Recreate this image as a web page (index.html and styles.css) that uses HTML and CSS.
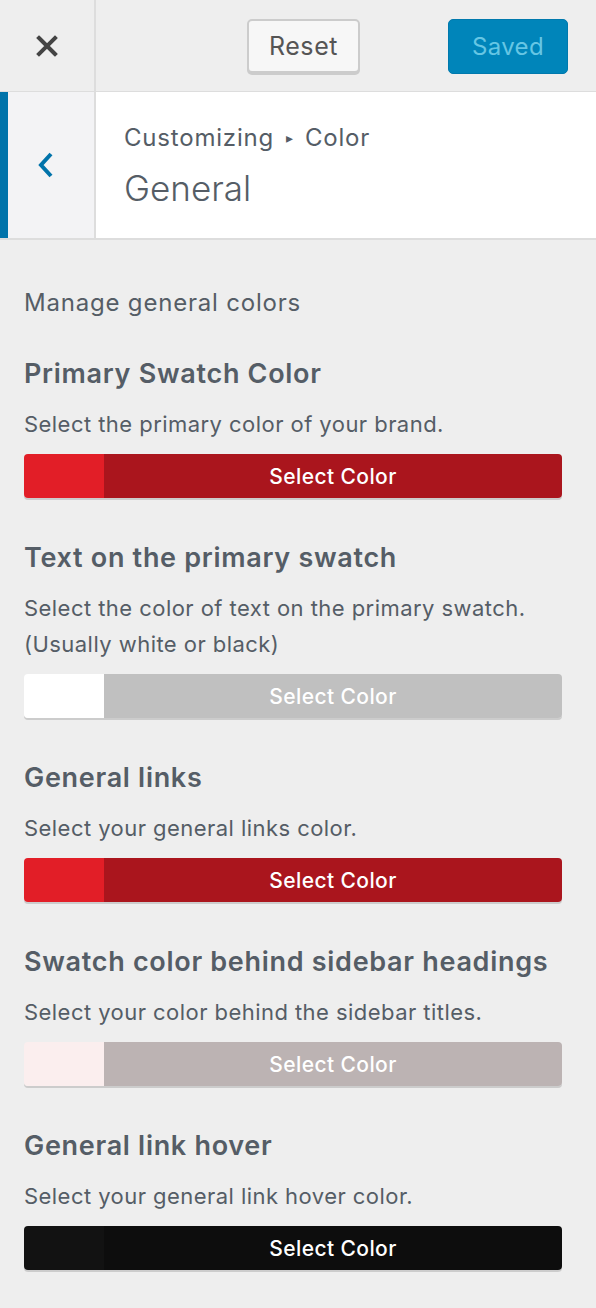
FILE: index.html
```html
<!DOCTYPE html>
<html>
<head>
<meta charset="utf-8">
<link rel="stylesheet" href="styles.css">
</head>
<body>
<div class="panel">
  <header class="topbar">
    <div class="close">
      <svg width="22" height="22" viewBox="0 0 22 22"><path d="M3 3 L19 19 M19 3 L3 19" stroke="#444" stroke-width="4" stroke-linecap="square"/></svg>
    </div>
    <div class="actions">
      <button class="btn reset">Reset</button>
      <button class="btn saved">Saved</button>
    </div>
  </header>
  <div class="sectionhead">
    <div class="back">
      <svg width="18" height="30" viewBox="0 0 18 30"><path d="M14 4 L4 15 L14 26" fill="none" stroke="#0073aa" stroke-width="4"/></svg>
    </div>
    <div class="titles">
      <div class="crumb">Customizing <span class="arrow">▸</span> Color</div>
      <div class="title">General</div>
    </div>
  </div>
  <main class="content">
    <p class="intro">Manage general colors</p>

    <section class="control">
      <h3>Primary Swatch Color</h3>
      <p class="desc">Select the primary color of your brand.</p>
      <div class="picker red"><span class="swatch"></span><span class="label">Select Color</span></div>
    </section>

    <section class="control">
      <h3>Text on the primary swatch</h3>
      <p class="desc">Select the color of text on the primary swatch. (Usually white or black)</p>
      <div class="picker white"><span class="swatch"></span><span class="label">Select Color</span></div>
    </section>

    <section class="control">
      <h3>General links</h3>
      <p class="desc">Select your general links color.</p>
      <div class="picker red"><span class="swatch"></span><span class="label">Select Color</span></div>
    </section>

    <section class="control">
      <h3>Swatch color behind sidebar headings</h3>
      <p class="desc">Select your color behind the sidebar titles.</p>
      <div class="picker pink"><span class="swatch"></span><span class="label">Select Color</span></div>
    </section>

    <section class="control">
      <h3>General link hover</h3>
      <p class="desc">Select your general link hover color.</p>
      <div class="picker black"><span class="swatch"></span><span class="label">Select Color</span></div>
    </section>
  </main>
</div>
</body>
</html>
```
FILE: styles.css
```css
* { box-sizing: border-box; }
html, body { margin: 0; padding: 0; }
body {
  background: #eeeeee;
  font-family: Inter, "Noto Sans", sans-serif;
  color: #555d66;
  width: 596px;
  height: 1308px;
  overflow: hidden;
}
.topbar {
  height: 92px;
  display: flex;
  border-bottom: 1px solid #dddddd;
  background: #eeeeee;
}
.close {
  width: 96px;
  border-right: 2px solid #dddddd;
  display: flex;
  align-items: center;
  justify-content: center;
}
.actions {
  flex: 1;
  display: flex;
  align-items: flex-start;
  padding-top: 19px;
  padding-left: 151px;
  gap: 88px;
}
.btn {
  font-family: Inter, "Noto Sans", sans-serif;
  font-size: 24px;
  height: 55px;
  border-radius: 5px;
  padding: 0;
  cursor: pointer;
}
.reset {
  width: 113px;
  background: #f7f7f7;
  color: #555;
  border: 2px solid #cccccc;
  box-shadow: 0 2px 0 #cccccc;
  height: 54px;
  font-size: 25px;
  letter-spacing: 0.6px;
}
.saved {
  width: 120px;
  background: #0085ba;
  color: #66c6e4;
  border: 1px solid #0079ad;
  letter-spacing: 0.4px;
}
.sectionhead {
  height: 148px;
  display: flex;
  background: #ffffff;
  border-bottom: 2px solid #dddddd;
}
.back {
  width: 96px;
  background: #f3f3f5;
  border-left: 8px solid #0073aa;
  border-right: 2px solid #dddddd;
  display: flex;
  align-items: center;
  justify-content: center;
  padding-right: 10px;
}
.titles {
  padding: 29px 0 0 28px;
}
.crumb {
  font-size: 24px;
  line-height: 34px;
  color: #555d66;
  letter-spacing: 0.8px;
}
.arrow {
  font-size: 14px;
  vertical-align: 3px;
  margin: 0 4px;
}
.title {
  font-size: 35px;
  font-weight: 300;
  line-height: 44px;
  margin-top: 11px;
  color: #555d66;
  letter-spacing: 0px;
}
.content {
  padding: 48px 34px 0 24px;
}
.intro {
  margin: 0 0 40px;
  font-size: 24px;
  line-height: 30px;
  letter-spacing: 0.8px;
}
.control {
  margin-bottom: 44px;
}
.control h3 {
  margin: 0;
  font-size: 27px;
  font-weight: 600;
  line-height: 32px;
  letter-spacing: 0.7px;
}
.desc {
  margin: 16px 0 12px;
  font-size: 22px;
  line-height: 36px;
  letter-spacing: 0.45px;
}
.picker {
  display: flex;
  height: 44px;
  border-radius: 4px;
  overflow: hidden;
  box-shadow: 0 2px 0 #cccccc;
}
.swatch {
  width: 80px;
}
.label {
  flex: 1;
  display: flex;
  align-items: center;
  justify-content: center;
  color: #ffffff;
  font-size: 21px;
  font-weight: 500;
  letter-spacing: 0.4px;
}
.red .swatch { background: #e21e27; }
.red .label { background: #aa151d; }
.white .swatch { background: #ffffff; }
.white .label { background: #c0c0c0; }
.pink .swatch { background: #fbeeee; }
.pink .label { background: #bcb3b3; }
.black .swatch { background: #121212; }
.black .label { background: #0d0d0d; }
```
